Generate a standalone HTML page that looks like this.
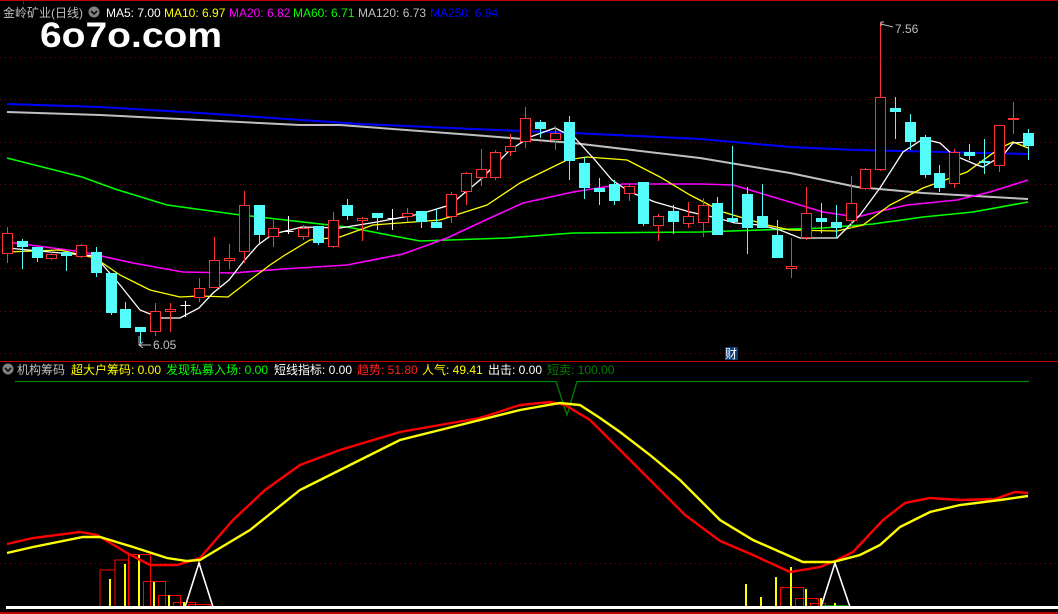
<!DOCTYPE html>
<html><head><meta charset="utf-8">
<style>
html,body{margin:0;padding:0;background:#000;width:1058px;height:614px;overflow:hidden}
svg{display:block}
text{font-family:"Liberation Sans","Noto Sans CJK SC",sans-serif}
</style></head>
<body>
<svg id="s" width="1058" height="614" viewBox="0 0 1058 614" xmlns="http://www.w3.org/2000/svg">
<rect width="1058" height="614" fill="#000"/>
<line x1="0" y1="0.5" x2="1058" y2="0.5" stroke="#c00000"/>
<line x1="23.5" y1="0" x2="23.5" y2="4" stroke="#c00000"/>
<g stroke="#800000" stroke-dasharray="1,4" stroke-width="1">
<line x1="0" y1="57.5" x2="1058" y2="57.5"/><line x1="0" y1="99.5" x2="1058" y2="99.5"/>
<line x1="0" y1="142.5" x2="1058" y2="142.5"/><line x1="0" y1="184.5" x2="1058" y2="184.5"/>
<line x1="0" y1="226.5" x2="1058" y2="226.5"/><line x1="0" y1="268.5" x2="1058" y2="268.5"/>
<line x1="0" y1="311.5" x2="1058" y2="311.5"/><line x1="0" y1="353.5" x2="1058" y2="353.5"/>
<line x1="0" y1="563.5" x2="1058" y2="563.5"/>
</g>
<line x1="0" y1="361.5" x2="1058" y2="361.5" stroke="#c00000"/>
<g fill="none" stroke-width="1.3">
<polyline stroke="#0000ff" stroke-width="2" points="7,104 100,107 200,113 360,124 473,129 573,133 700,139 790,147 857,150 1028,154"/>
<polyline stroke="#c0c0c0" stroke-width="2" points="7,112 100,115 200,120 300,125 340,125 473,135 573,143 700,158 790,173 857,187 923,193 1028,199"/>
<polyline stroke="#00ff00" stroke-width="1.6" points="7,158 82,177 115,189 167,205 233,214 347,227 420,241 507,238 573,233 700,232 823,228 873,224 923,217 973,212 1028,202"/>
<polyline stroke="#ff00ff" stroke-width="1.6" points="7,242 83,252 133,263 183,272 233,273 283,269 347,265 403,254 447,238 490,218 523,203 573,192 623,184 700,184 733,185 790,202 823,212 857,217 877,212 907,205 957,200 990,192 1028,180"/>
<polyline stroke="#ffff00" points="7,252 60,250 95,258 120,275 150,290 180,297 200,296 228,297 250,280 270,265 285,255 310,240 340,237 373,225 440,220 487,205 520,183 567,160 587,157 627,160 660,177 690,195 723,212 767,225 790,230 837,231 863,225 890,205 923,188 967,172 1000,148 1013,142 1028,148"/>
<polyline stroke="#ffffff" points="7,248 50,252 95,256 120,285 140,310 160,318 180,318 199,308 213,293 229,280 243,262 258,245 273,234 290,230 302,227 340,228 377,222 420,214 450,205 480,180 510,150 530,137 555,128 575,138 595,160 612,180 630,192 655,202 690,212 717,218 735,223 760,225 780,230 800,238 837,238 860,215 880,188 903,152 923,139 940,143 953,155 977,165 983,167 1003,155 1013,143 1028,142"/>
</g>
<g id="candles"></g>
<g fill="#c0c0c0" font-size="12">
<text x="153" y="349">6.05</text>
<text x="895" y="33">7.56</text>
</g>
<path d="M139,336 L139,345 L151,345 M143,342 L139,345 L143,348" stroke="#c0c0c0" fill="none"/>
<path d="M881,24 L893,27 M881,22 L884,22 M881,22 L881,26" stroke="#c0c0c0" fill="none"/>
<rect x="725" y="347" width="13" height="13" fill="#0b3d78"/>
<text x="725" y="358" font-size="12" fill="#fff">财</text>
<!-- header -->
<g font-size="12">
<text x="3" y="17" fill="#c0c0c0">金岭矿业(日线)</text>
<circle cx="94" cy="12" r="5.5" fill="#808080"/>
<path d="M91,11 L94,14 L97,11" stroke="#000" stroke-width="1.5" fill="none"/>
<text x="106" y="17" fill="#ffffff">MA5: 7.00</text>
<text x="164" y="17" fill="#ffff00">MA10: 6.97</text>
<text x="229" y="17" fill="#ff00ff">MA20: 6.82</text>
<text x="293" y="17" fill="#00ff00">MA60: 6.71</text>
<text x="358" y="17" fill="#c0c0c0">MA120: 6.73</text>
<text x="430" y="17" fill="#0000ff">MA250: 6.94</text>
</g>
<text x="40" y="47" font-size="35" font-weight="bold" fill="#fff" textLength="182" lengthAdjust="spacingAndGlyphs">6o7o.com</text>
<g font-size="12">
<circle cx="8" cy="369" r="5.5" fill="#808080"/>
<path d="M5,368 L8,371 L11,368" stroke="#000" stroke-width="1.5" fill="none"/>
<text x="17" y="374" fill="#c0c0c0">机构筹码</text>
<text x="71" y="374" fill="#ffff00">超大户筹码: 0.00</text>
<text x="166" y="374" fill="#00ff00">发现私募入场: 0.00</text>
<text x="274" y="374" fill="#ffffff">短线指标: 0.00</text>
<text x="357" y="374" fill="#ff2020">趋势: 51.80</text>
<text x="422" y="374" fill="#ffff00">人气: 49.41</text>
<text x="488" y="374" fill="#ffffff">出击: 0.00</text>
<text x="547" y="374" fill="#008000">短卖: 100.00</text>
</g>
<polyline fill="none" stroke="#008000" stroke-width="1.3" points="15,381.5 556,381.5 567,415 577,381.5 1029,381.5"/>
<!-- volume blocks -->
<g fill="none" stroke="#ff0000" stroke-width="1">
<rect x="100" y="570" width="15" height="37"/><rect x="115" y="560" width="14" height="47"/>
<rect x="128.5" y="554.5" width="22" height="52"/><rect x="143.5" y="581.5" width="22" height="25"/>
<rect x="158.5" y="595.5" width="22" height="11"/><rect x="173.5" y="602.5" width="22" height="4"/>
<rect x="188.5" y="604.5" width="22" height="2"/>
<rect x="780.5" y="587.5" width="23" height="19"/><rect x="795.5" y="598.5" width="23" height="8"/>
<rect x="810.5" y="603.5" width="15" height="3"/>
</g>
<g fill="#ffff00">
<rect x="109" y="579" width="2" height="28"/><rect x="124" y="564" width="2" height="43"/>
<rect x="138" y="555" width="2" height="52"/><rect x="153" y="582" width="2" height="25"/>
<rect x="168" y="595" width="2" height="12"/><rect x="183" y="602" width="2" height="5"/>
<rect x="745" y="584" width="2" height="23"/><rect x="760" y="597" width="2" height="10"/>
<rect x="775" y="577" width="2" height="30"/><rect x="790" y="567" width="2" height="40"/>
<rect x="805" y="589" width="2" height="18"/><rect x="820" y="598" width="2" height="9"/>
<rect x="834" y="603" width="2" height="4"/>
</g>
<line x1="823" y1="606" x2="848" y2="606" stroke="#00ff00"/>
<g fill="none" stroke="#fff" stroke-width="1.6">
<polyline points="185,607 199,563 213,607"/>
<polyline points="821,607 835,563 850,607"/>
</g>
<g fill="none" stroke-width="2.4">
<polyline stroke="#ff0000" points="7,544 33,538 80,532 97,535 127,553 150,565 177,565 200,558 233,520 265,490 300,465 340,450 400,432 440,425 480,418 520,405 550,402 565,405 590,420 620,450 650,480 685,515 720,541 753,555 790,572 820,567 837,560 853,552 883,520 905,503 930,498 960,500 995,499 1015,492 1028,493"/>
<polyline stroke="#ffff00" points="7,553 33,547 83,537 100,537 133,547 167,558 187,561 200,560 225,545 250,530 275,510 300,490 350,465 400,440 460,425 520,410 560,403 580,405 600,418 620,432 650,455 680,480 720,520 753,540 803,562 833,562 860,555 880,545 900,527 930,512 960,505 1000,500 1028,496"/>
</g>
<rect x="6" y="606" width="1052" height="3" fill="#fff"/>
<rect x="0" y="612" width="1058" height="2" fill="#c00000"/>
</svg>
<script>
var d=[
['r',233,254,227,263],['c',241,247,239,269],['c',247,258,247,262],['r',254,259,252,260],['c',252,256,252,271],
['r',245,257,244,258],['c',252,273,247,277],['c',273,313,273,315],['c',309,328,302,328],['c',327,332,327,343],
['r',311,332,303,336],['r',309,312,303,332],['w',305,305,301,317],['r',288,298,278,302],['r',260,288,237,288],
['r',258,261,244,269],['r',205,252,191,263],['c',205,235,205,245],['r',228,237,218,247],['w',231,231,216,234],
['r',228,237,225,240],['c',226,243,226,245],['r',220,247,212,248],['c',205,216,199,220],['r',218,221,217,241],
['c',213,218,213,230],['w',218,218,209,230],['r',213,217,208,222],['c',211,222,211,228],['c',222,228,209,228],
['r',194,217,192,223],['r',173,192,172,205],['r',169,178,149,186],['r',152,178,150,180],['r',146,152,134,156],
['r',118,142,107,148],['c',122,129,120,138],['r',133,140,126,150],['c',122,161,116,180],['c',163,188,157,199],
['c',188,192,178,205],['c',184,201,180,205],['r',186,194,183,201],['c',182,224,182,226],['r',216,226,214,241],
['c',211,222,205,234],['r',216,224,202,228],['r',205,223,198,237],['c',203,235,197,235],['c',218,222,146,222],
['c',194,228,187,254],['c',216,228,184,228],['c',235,258,220,258],['r',266,269,238,278],['r',213,238,187,240],
['c',218,222,203,233],['c',222,228,205,237],['r',203,221,176,228],['r',169,189,168,190],['r',97,170,22,171],
['c',108,112,97,139],['c',122,142,114,150],['c',137,175,135,178],['c',173,188,165,192],['r',152,184,149,188],
['c',152,156,144,160],['c',161,163,139,174],['r',125,166,125,172],['r',118,120,102,134],['c',133,146,129,160]];
var g=document.getElementById('candles'),h='';
for(var i=0;i<d.length;i++){var c=d[i],x=Math.round(7+14.8*i)+0.5,t=c[0],bt=c[1],bb=c[2],wt=c[3],wb=c[4];
if(t=='w'){h+='<line x1="'+x+'" y1="'+wt+'" x2="'+x+'" y2="'+wb+'" stroke="#fff"/><line x1="'+(x-5)+'" y1="'+(bt+.5)+'" x2="'+(x+5)+'" y2="'+(bt+.5)+'" stroke="#fff"/>';continue;}
var col=t=='r'?'#ff3333':'#54fcfc';
h+='<line x1="'+x+'" y1="'+wt+'" x2="'+x+'" y2="'+wb+'" stroke="'+col+'"/>';
if(bb-bt<2)bb=bt+2;
if(t=='r')h+='<rect x="'+(x-5)+'" y="'+(bt+.5)+'" width="10" height="'+(bb-bt-1)+'" fill="#000" stroke="'+col+'"/>';
else h+='<rect x="'+(x-5.5)+'" y="'+bt+'" width="11" height="'+(bb-bt)+'" fill="'+col+'"/>';}
g.innerHTML=h;
</script>
</body></html>
